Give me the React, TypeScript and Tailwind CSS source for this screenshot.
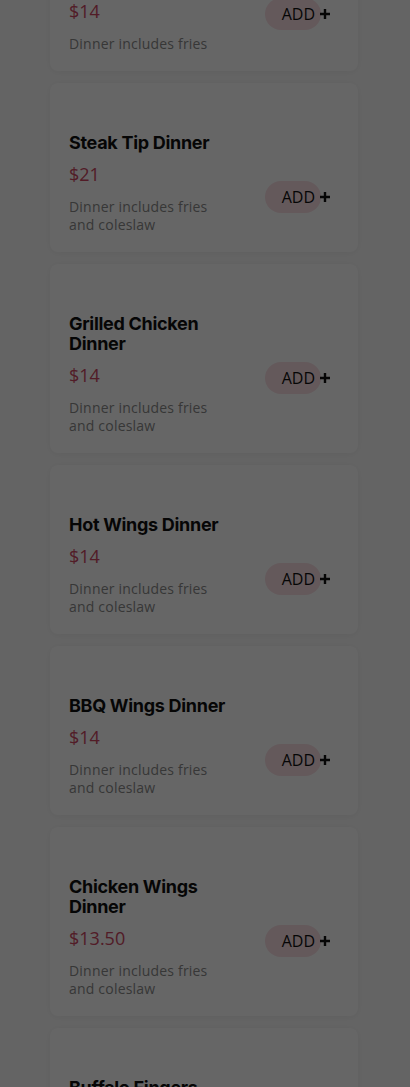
import React from "react";

type Item = {
  name: string;
  price: string;
  desc: string;
};

const items: Item[] = [
  { name: "Fried Haddock Dinner", price: "$14", desc: "Dinner includes fries" },
  { name: "Steak Tip Dinner", price: "$21", desc: "Dinner includes fries and coleslaw" },
  { name: "Grilled Chicken Dinner", price: "$14", desc: "Dinner includes fries and coleslaw" },
  { name: "Hot Wings Dinner", price: "$14", desc: "Dinner includes fries and coleslaw" },
  { name: "BBQ Wings Dinner", price: "$14", desc: "Dinner includes fries and coleslaw" },
  { name: "Chicken Wings Dinner", price: "$13.50", desc: "Dinner includes fries and coleslaw" },
  { name: "Buffalo Fingers Dinner", price: "$14", desc: "Dinner includes fries and coleslaw" },
];

function PlusIcon() {
  return (
    <svg width="12" height="12" viewBox="0 0 12 12" className="-ml-[2px] shrink-0">
      <path d="M6 1v10M1 6h10" stroke="#111" strokeWidth="2.4" strokeLinecap="butt" />
    </svg>
  );
}

function MenuCard({ item }: { item: Item }) {
  return (
    <div className="flex justify-between rounded-lg bg-white pl-[19px] pt-[50px] pb-[18px] shadow-[0_1px_8px_rgba(0,0,0,0.06)]">
      <div className="w-[180px]">
        <h3 className="font-['Inter',sans-serif] text-[18px] font-bold leading-[20px] tracking-[-0.3px] text-[#111]">
          {item.name}
        </h3>
        <p className="mt-[9px] font-['Open_Sans',sans-serif] text-[18px] leading-[24px] text-[#cc4862]">
          {item.price}
        </p>
        <p className="mt-[12px] max-w-[160px] font-['Open_Sans',sans-serif] text-[14px] leading-[18px] tracking-[0.2px] text-[#8a8a8a]">
          {item.desc}
        </p>
      </div>
      <div className="pt-[48px] pr-[27px]">
        <button className="flex items-center">
          <span className="flex h-8 items-center rounded-full bg-[#f9dfe4] pl-[17px] pr-[6px] font-['Open_Sans',sans-serif] text-[16px] text-[#111]">
            ADD
          </span>
          <PlusIcon />
        </button>
      </div>
    </div>
  );
}

export default function App() {
  return (
    <div className="relative h-[1087px] overflow-hidden bg-[#fbfbfb]">
      <div className="-mt-[100px] ml-[50px] flex w-[308px] flex-col gap-3">
        {items.map((item) => (
          <MenuCard key={item.name} item={item} />
        ))}
      </div>
      <div className="fixed inset-0 bg-black/60" />
    </div>
  );
}
